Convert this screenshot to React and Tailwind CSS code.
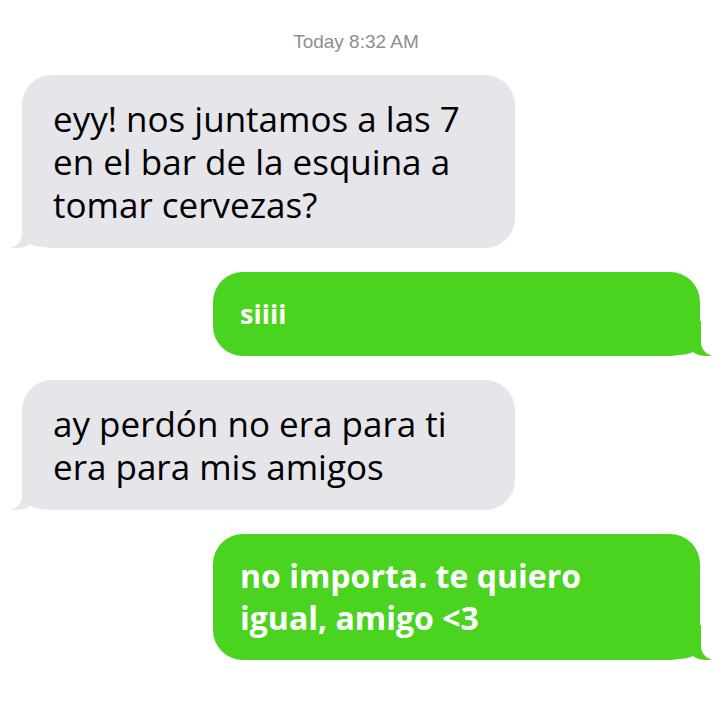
import React from 'react';

const messages = [
  { from: 'them', lines: ['eyy! nos juntamos a las 7', 'en el bar de la esquina a', 'tomar cervezas?'] },
  { from: 'me', lines: ['siiii'], small: true },
  { from: 'them', lines: ['ay perdón no era para ti', 'era para mis amigos'] },
  { from: 'me', lines: ['no importa. te quiero', 'igual, amigo <3'] },
];

function GrayTail() {
  return (
    <svg className="absolute left-[-11px] bottom-[-1px]" width="36" height="36" viewBox="0 0 36 36">
      <path d="M11 0 L11 20 C11 27 8 32 0 35 C10 35.5 15 34 19 31 C23 33 28 34 33 34 L36 34 L36 0 Z" fill="#e5e5ea" />
    </svg>
  );
}

function GreenTail() {
  return (
    <svg className="absolute right-[-12px] bottom-[-1px]" width="36" height="36" viewBox="0 0 36 36">
      <path d="M25 0 L25 20 C25 27 28 32 36 35 C26 35.5 21 34 17 31 C13 33 8 34 3 34 L0 34 L0 0 Z" fill="#4ad41f" />
    </svg>
  );
}

function Bubble({ msg }) {
  const mine = msg.from === 'me';
  return (
    <div className={mine ? 'flex justify-end pr-[28px]' : 'flex justify-start pl-[22px]'}>
      <div
        className={
          mine
            ? 'relative w-[487px] rounded-[30px] bg-[#4ad41f] px-[27px] py-[21px] font-bold leading-[42px] text-white'
            : 'relative w-[493px] rounded-[30px] bg-[#e5e5ea] pl-[31px] pr-[20px] py-[22px] text-[35px] leading-[43px] text-black'
        }
      >
        {mine ? <GreenTail /> : <GrayTail />}
        <div className={mine ? (msg.small ? 'relative text-[27px]' : 'relative text-[32px]') : 'relative'}>
          {msg.lines.map((l, i) => (
            <div key={i}>{l}</div>
          ))}
        </div>
      </div>
    </div>
  );
}

export default function App() {
  return (
    <div className="min-h-[714px] w-[728px] bg-white pt-[31px]" style={{ fontFamily: '"Open Sans", "Noto Sans", sans-serif' }}>
      <div
        className="mb-[22px] pr-[16px] text-center text-[19px] leading-[22px] text-[#8e8e93]"
        style={{ fontFamily: '"Liberation Sans", Arial, sans-serif' }}
      >
        Today 8:32 AM
      </div>
      <div className="flex flex-col gap-[24px]">
        {messages.map((m, i) => (
          <Bubble key={i} msg={m} />
        ))}
      </div>
    </div>
  );
}
